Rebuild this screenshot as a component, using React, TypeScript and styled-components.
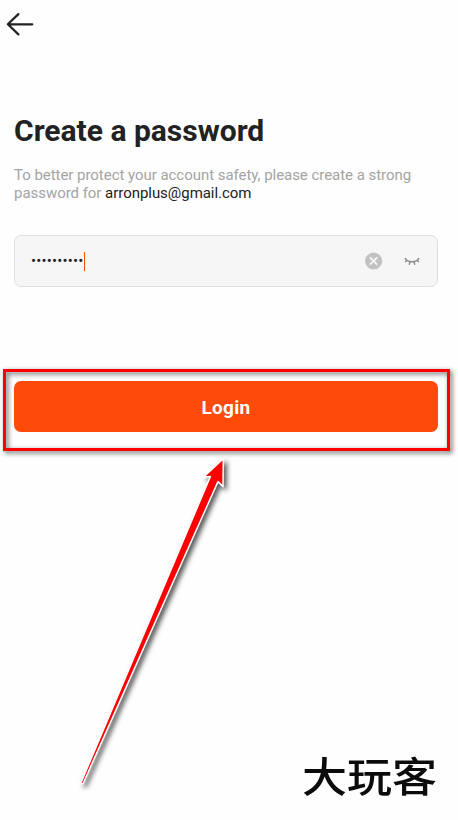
import { useState } from 'react'
import styled, { createGlobalStyle } from 'styled-components'

const App = () => {
  const [password, setPassword] = useState('arron12345')

  return (
    <>
      <GlobalStyle />
      <Screen>
        <Header>
          <BackButton aria-label="Back">
            <svg width="28" height="24" viewBox="0 0 28 24">
              <path d="M26.3 12.3H2.2M12.4 2.1L1.8 12.3L12.4 22.4" />
            </svg>
          </BackButton>
        </Header>
        <Content>
          <Title>Create a password</Title>
          <Hint>
            To better protect your account safety, please create a strong
            <br />
            password for <Email>arronplus@gmail.com</Email>
          </Hint>
          <Field>
            <Value>
              <Bullets>{'•'.repeat(password.length)}</Bullets>
              <Caret />
            </Value>
            <IconButton aria-label="Clear" onClick={() => setPassword('')}>
              <svg width="18" height="18" viewBox="0 0 18 18">
                <circle cx="8.6" cy="9" r="8.6" fill="#c2c2c2" />
                <path
                  d="M5 5.4L12.2 12.6M12.2 5.4L5 12.6"
                  stroke="#f6f6f6"
                  strokeWidth="1.7"
                />
              </svg>
            </IconButton>
            <IconButton aria-label="Show password">
              <svg
                width="16"
                height="10"
                viewBox="0 0 16 10"
                fill="none"
                stroke="#8c8c8c"
                strokeWidth="1.5"
              >
                <path d="M.9 2.1C4 6.9 12 6.9 15.1 2.1M3 4L1.3 6.1M6 5.6L5.2 8.8M10 5.6L10.8 8.8M13 4L14.7 6.1" />
              </svg>
            </IconButton>
          </Field>
          <LoginArea>
            <LoginButton>Login</LoginButton>
            <Highlight />
          </LoginArea>
        </Content>
        <Watermark>大玩客</Watermark>
        <Arrow width="170" height="350" viewBox="70 450 170 350">
          <path d="M223.3 458.8L203.4 477.3L210.4 476.4L81 782.8Q81.6 784.6 83.2 783.3L218 481.6L223 486.6Z" />
        </Arrow>
      </Screen>
    </>
  )
}

export default App

const GlobalStyle = createGlobalStyle`
  * {
    box-sizing: border-box;
  }
  body {
    margin: 0;
    background: #fefefe;
    font-family: Roboto, sans-serif;
  }
  button {
    border: 0;
    padding: 0;
    background: transparent;
    font-family: inherit;
  }
`

const Screen = styled.main`
  position: relative;
  display: flex;
  flex-direction: column;
  width: 458px;
  height: 820px;
  overflow: hidden;
`

const Header = styled.header`
  display: flex;
  height: 48px;
  padding: 12px 7px 0 6px;
`

const BackButton = styled.button`
  width: 28px;
  height: 24px;

  svg {
    display: block;
    fill: none;
    stroke: #222;
    stroke-width: 2.2;
    stroke-linecap: round;
    stroke-linejoin: round;
  }
`

const Content = styled.section`
  display: flex;
  flex-direction: column;
  padding: 65px 20px 0 14px;
`

const Title = styled.h1`
  margin: 0;
  color: #222;
  font-size: 30px;
  font-weight: 700;
  line-height: 36px;
  white-space: nowrap;
`

const Hint = styled.p`
  height: 36px;
  margin: 17px 0 0;
  padding-top: 1px;
  color: #a4a4a4;
  font-size: 15px;
  letter-spacing: -0.04px;
  line-height: 17.5px;
  white-space: nowrap;
`

const Email = styled.span`
  color: #222;
`

const Field = styled.div`
  display: flex;
  align-items: center;
  gap: 21px;
  height: 52px;
  margin-top: 33px;
  padding: 0 17px 0 16px;
  border: 1px solid #dedede;
  border-radius: 7px;
  background: #f6f6f6;
`

const Value = styled.div`
  display: flex;
  flex: 1;
  align-items: center;
`

const Bullets = styled.span`
  width: 53px;
  color: #222;
  font-size: 15px;
  letter-spacing: 0.2px;
  line-height: 20px;
  white-space: nowrap;
`

const Caret = styled.span`
  flex: none;
  width: 1px;
  height: 19px;
  background: #ff4b0a;
`

const IconButton = styled.button`
  display: flex;

  svg {
    display: block;
  }
`

const LoginArea = styled.div`
  position: relative;
  margin-top: 94px;
`

const LoginButton = styled.button`
  width: 100%;
  height: 51px;
  padding-top: 2px;
  border-radius: 7px;
  background: #ff4b0a;
  color: #fff;
  font-size: 19px;
  font-weight: 700;
  letter-spacing: 0.3px;
  line-height: 22px;
`

const Highlight = styled.div`
  position: absolute;
  top: -12px;
  right: -12px;
  left: -11px;
  height: 82px;
  border: 3px solid #f00;
  filter: drop-shadow(2px 2px 2.5px rgba(0, 0, 0, 0.65));
  pointer-events: none;
`

const Watermark = styled.div`
  margin: auto 21px 12px auto;
  color: #0b0b0b;
  font-family: 'Noto Sans CJK SC', sans-serif;
  font-size: 45px;
  font-weight: 500;
  line-height: 66px;
  transform: scaleY(0.91);
`

const Arrow = styled.svg`
  position: absolute;
  top: 450px;
  left: 70px;
  fill: #f00;
  stroke: #fff;
  stroke-width: 1.5;
  stroke-linejoin: round;
  filter: drop-shadow(3px 3px 2.5px rgba(0, 0, 0, 0.65));
  pointer-events: none;
`
